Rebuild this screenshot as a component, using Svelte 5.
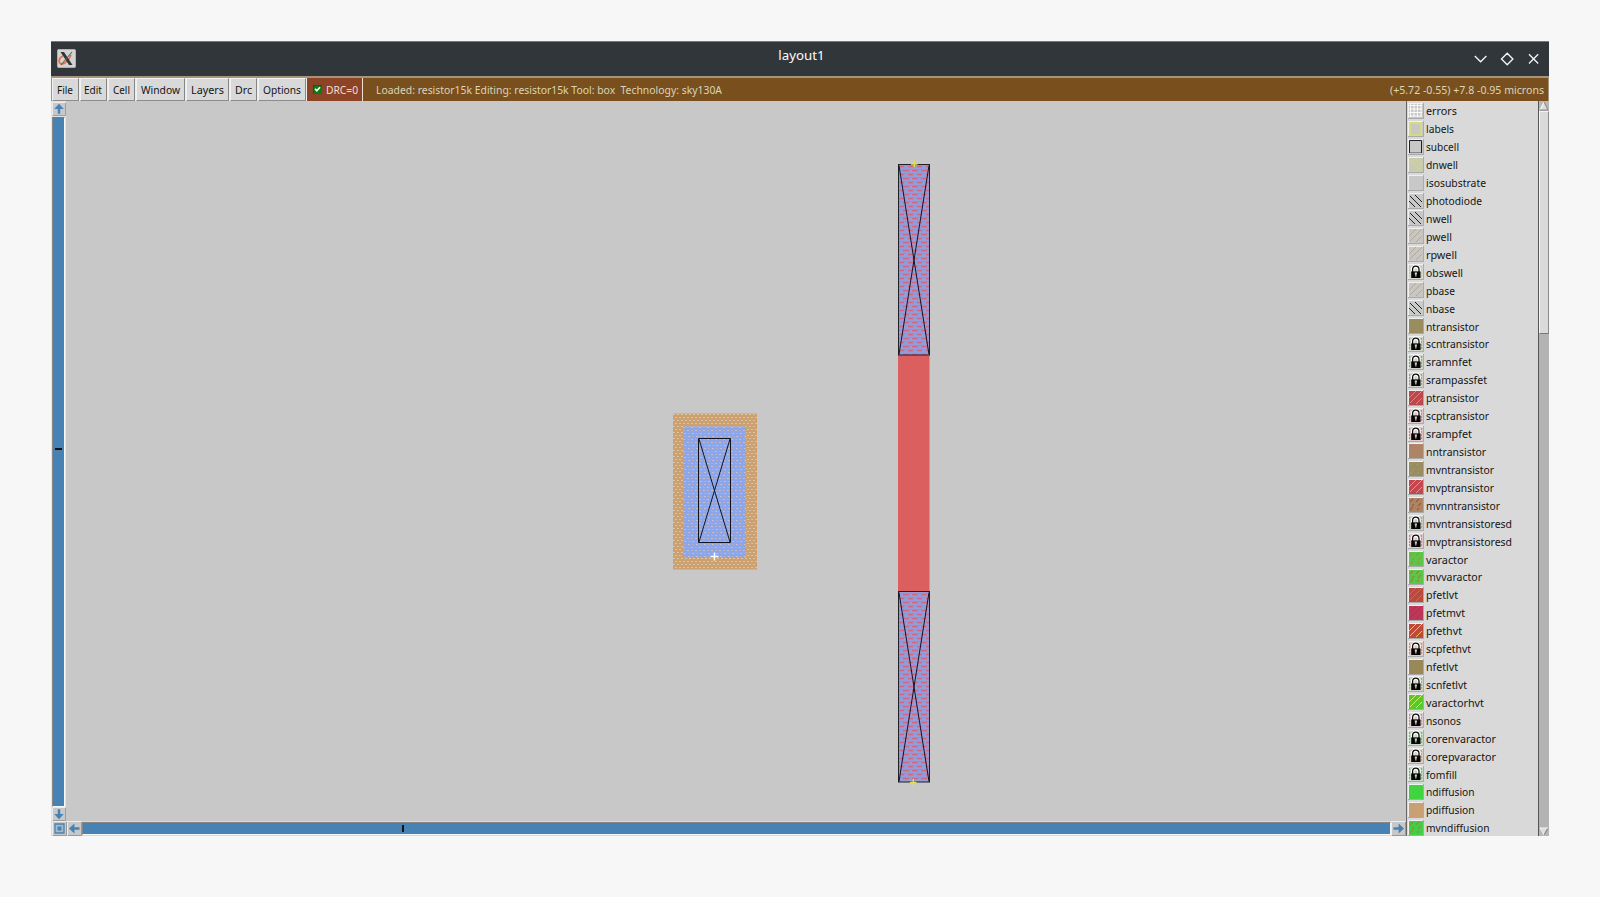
<script>
  // name, button width, label width
  const menus = [['File', 27.5, 16], ['Edit', 28.5, 18], ['Cell', 28, 17], ['Window', 50, 39], ['Layers', 44, 33], ['Drc', 28, 17], ['Options', 49, 38]];
  // name, rendered text width, swatch style, base colour, accent colour
  const layers = [
    ['errors', 31, 'grid', '#c6c6c6', '#fff'],
    ['labels', 28, 'frame', '#c8c8c0', '#d8df76'],
    ['subcell', 33, 'corner', '#c8c8c8', '#222'],
    ['dnwell', 32, 'back', '#cacaae', '#cdd39d'],
    ['isosubstrate', 60, 'plain', '#c8c8c8', ''],
    ['photodiode', 56, 'diag', '#c8c8c8', '#222'],
    ['nwell', 26, 'diag', '#c8c8c8', '#222'],
    ['pwell', 26, 'slash', '#c9c6c2', '#aea797'],
    ['rpwell', 31, 'slash', '#c9c6c2', '#aea797'],
    ['obswell', 37, 'lock', '#d8d8ce', '#c6c8a0'],
    ['pbase', 29, 'slash', '#c9c6c2', '#aea797'],
    ['nbase', 29, 'diag', '#c8cbc8', '#222'],
    ['ntransistor', 53, 'back', '#9d8b60', '#8e965a'],
    ['scntransistor', 63, 'lock', '#ccd2c5', '#84ae78'],
    ['sramnfet', 46, 'lock', '#ccd2c5', '#84ae78'],
    ['srampassfet', 61, 'lock', '#d0d2c8', '#96a886'],
    ['ptransistor', 53, 'slash', '#bd474c', '#e28c84'],
    ['scptransistor', 63, 'lock', '#e0c8ca', '#d87c82'],
    ['srampfet', 46, 'lock', '#e0c8ca', '#d87c82'],
    ['nntransistor', 60, 'plain', '#ae8467', ''],
    ['mvntransistor', 68, 'dots', '#9d8964', '#87a850'],
    ['mvptransistor', 68, 'slash', '#c4474f', '#e89a9e'],
    ['mvnntransistor', 74, 'dots', '#ae8467', '#98603f'],
    ['mvntransistoresd', 86, 'lock', '#ccccc2', '#a6a894'],
    ['mvptransistoresd', 86, 'lock', '#e0c8ce', '#d87c92'],
    ['varactor', 42, 'dots', '#58c846', '#9d9444'],
    ['mvvaractor', 56, 'dots', '#58c846', '#ac7848'],
    ['pfetlvt', 32, 'slash', '#b94a42', '#c97840'],
    ['pfetmvt', 39, 'slash', '#bf365b', '#a8304c'],
    ['pfethvt', 36, 'slash', '#c04a38', '#ffd060'],
    ['scpfethvt', 45, 'lock', '#e2cac2', '#dc8c76'],
    ['nfetlvt', 32, 'slash', '#98895a', '#a88048'],
    ['scnfetlvt', 41, 'lock', '#d0d4c4', '#90b07c'],
    ['varactorhvt', 58, 'slash', '#58c92c', '#e8f060'],
    ['nsonos', 35, 'lock', '#dccdd0', '#c890a0'],
    ['corenvaractor', 70, 'lock', '#c6dcc4', '#60cc58'],
    ['corepvaractor', 70, 'lock', '#dcd0c6', '#d0a07c'],
    ['fomfill', 31, 'lock', '#c4d8c4', '#70c074'],
    ['ndiffusion', 48.5, 'plain', '#40d540', ''],
    ['pdiffusion', 48.5, 'plain', '#c9a073', ''],
    ['mvndiffusion', 63.5, 'dots', '#40d046', '#7a9a3c']
  ];
</script>

{#snippet label(text, width)}
  <svg class="label" width={width} height="17" viewBox="0 0 {width} 17"><text x="0" y="12.5" textLength={width} lengthAdjust="spacingAndGlyphs">{text}</text></svg>
{/snippet}

{#snippet arrow(angle)}
  <svg class="arrow" width="15" height="15" viewBox="0 0 15 15">
    <path d="M0.5 14.5V.5H14.5" stroke="#eee" fill="none" />
    <path d="M14.5 1V14.5H1" stroke="#999" fill="none" />
    <path transform="rotate({angle} 7.5 7.5)" d="M7.5 2 12.6 7.4H8.8V12.5H6.2V7.4H2.4Z" fill="#4682b4" />
  </svg>
{/snippet}

<main>
  <section class="window">
    <header>
      <svg class="logo" width="19" height="19" viewBox="0 0 19 19">
        <rect x=".5" y=".5" width="18" height="18" rx="1" fill="#d3d4d2" stroke="#aeb1b2" />
        <path d="M6 7C1 9 1 15 5 15c3 0 7-4 9-9" fill="none" stroke="#e2754b" stroke-width="1.8" />
        <path d="M3.5 3H7L15.5 16H12Z" fill="#30363a" />
        <path d="M15 3 4 16" stroke="#5c6164" stroke-width="1.1" />
      </svg>
      <h1>layout1</h1>
      <svg class="controls" width="66" height="14" viewBox="0 0 66 14">
        <g fill="none" stroke="#f4f4f4" stroke-width="1.35">
          <path d="M.8 4 6.6 9.8 12.4 4M27.5 7 33.2 1.3 38.9 7 33.2 12.7ZM55 2.2 64.2 11.4M64.2 2.2 55 11.4" />
        </g>
      </svg>
    </header>

    <nav>
      {#each menus as [name, w, textWidth]}
        <button style="width:{w - 1}px">{@render label(name, textWidth)}</button>
      {/each}
      <div class="drc">
        <svg width="9" height="9" viewBox="0 0 9 9"><path d="M0 0H9V9H0Z" fill="#097d15" /><path d="M0 9V0H9" fill="none" stroke="#123f12" /><path d="M2 3.7 3.8 5.8 7 2.3" fill="none" stroke="#fff" stroke-width="1.7" /></svg>
        {@render label('DRC=0', 32)}
      </div>
      <div class="status">
        {@render label('Loaded: resistor15k Editing: resistor15k Tool: box\u00a0 Technology: sky130A', 346)}
        {@render label('(+5.72 -0.55) +7.8 -0.95 microns', 154)}
      </div>
    </nav>

    <div class="workspace">
      <div class="vertical">
        {@render arrow(0)}
        <div class="track"><i></i></div>
        {@render arrow(180)}
      </div>

      <svg class="canvas" width="1340" height="720" viewBox="66 101 1340 720">
        <defs>
          <pattern id="diff" x="673" y="413" width="4" height="6" patternUnits="userSpaceOnUse">
            <rect width="4" height="6" fill="#cda16f" /><path d="M0 1.5H2M2 4.5H4" stroke="#d8c3a4" />
          </pattern>
          <pattern id="local" x="683" y="426" width="8" height="12" patternUnits="userSpaceOnUse">
            <rect width="8" height="12" fill="#8ca6ec" />
            <path d="M0 1.5H2M4 4.5H6M1 7.5H3M5 10.5H7" stroke="#c2bfcb" />
            <path d="M4 1.5H6M0 4.5H2M5 7.5H7M1 10.5H3" stroke="#c0a8ae" />
          </pattern>
          <pattern id="poly" x="898" y="164" width="9" height="8" patternUnits="userSpaceOnUse">
            <rect width="9" height="8" fill="#959bd8" />
            <path d="M1 2.5H6M0 6.5H2M5 6.5H9" stroke="#cf687e" stroke-width="1.5" />
            <path d="M6 1.5H9M2 5.5H6M3 3.5H5M7 7.5H9" stroke="#b389ac" stroke-width=".9" />
          </pattern>
        </defs>
        <rect x="673" y="413.5" width="84" height="156" fill="url(#diff)" />
        <rect x="683" y="426.5" width="63" height="131" fill="url(#local)" />
        <g fill="none" stroke="#111420" stroke-width="1">
          <path d="M698.5 438.5H730.5V542.5H698.5ZM699 439 730 542M730 439 699 542" />
        </g>
        <path d="M710.5 556.5H718.5M714.5 552.5V560.5" stroke="#fff" stroke-width="1.4" />

        <rect x="898" y="355" width="31.5" height="237" fill="#dc5f5f" />
        {#each [164.5, 591.5] as y}
          <rect x="898.5" {y} width="31" height="190.5" fill="url(#poly)" stroke="#202028" stroke-width="1" />
          <path d="M899 {y + 1}L929 {y + 190}M929 {y + 1}L899 {y + 190}" stroke="#15121d" stroke-width="1" />
        {/each}
        <path d="M911 164H917.5M914.3 160.5V167M910 782.5H916.5M913.3 779V786" stroke="#e9df45" stroke-width="1.3" />
      </svg>

      <div class="bottom">
        <svg class="arrow" width="15" height="15" viewBox="0 0 15 15">
          <path d="M.5 14.5V.5H14.5" fill="none" stroke="#eee" /><path d="M14.5 1V14.5H1" fill="none" stroke="#999" />
          <path d="M3 3H12V12H3Z" fill="#a6bac8" stroke="#4682b4" stroke-width="1.3" /><rect x="5.5" y="5.5" width="4" height="4" fill="#4682b4" />
        </svg>
        {@render arrow(-90)}
        <div class="track"><i></i></div>
        {@render arrow(90)}
      </div>

      <aside>
        {#each layers as [name, width, kind, base, accent]}
          <div class="layer">
            <svg class="swatch" width="16" height="16" viewBox="0 0 16 16">
              <path d="M0 0H16V16H0Z" fill="#aaa" /><path d="M0 0H15V1H1V15H0Z" fill="#f0f0f0" />
              <rect x="1" y="1" width="14" height="14" fill={base} />
              {#if kind === 'grid'}
                <path d="M1 2.5H14M1 6H14M1 9.5H14M1 13H14M2.5 1V14M6 1V14M9.5 1V14M13 1V14" stroke={accent} stroke-width=".9" />
              {:else if kind === 'frame'}
                <rect x="2" y="2" width="11" height="12" fill="none" stroke={accent} stroke-width="1.5" />
              {:else if kind === 'corner'}
                <path d="M1.5 14V1.5H13.5V14" fill="none" stroke={accent} stroke-width="1" />
                <path d="M2 13.5H13" stroke="#888" />
              {:else if kind === 'diag'}
                <path d="M1 8 7 14M2 3 13 14M7 2 14 9" stroke={accent} stroke-width="1" />
              {:else if kind === 'slash'}
                <path d="M1 8 8 1M2 13 14 1M8 14 14 8" stroke={accent} stroke-width=".9" />
              {:else if kind === 'back'}
                <path d="M2 3 13 14M7 2 14 9" stroke={accent} stroke-width="1.2" />
              {:else if kind === 'dots'}
                <path d="M2 5 5 2M8 5 11 2M4 9 6 7M10 9 13 6M2 13 5 10M9 13 11 11" stroke={accent} stroke-width="1.2" />
              {:else if kind === 'lock'}
                <path d="M1.5 2V14M13.5 2V14M4 3 6 1M10 2 12 4" stroke={accent} stroke-width="1.2" stroke-dasharray="2 1" />
                <path d="M4.6 8V5.6Q4.6 2.2 7.8 2.2T11 5.6V8" stroke="#fff" stroke-width="3.4" fill="none" />
                <path d="M4.6 8V5.6Q4.6 2.2 7.8 2.2T11 5.6V8" stroke="#090909" stroke-width="1.3" fill="none" />
                <rect x="3.2" y="7.4" width="9.3" height="6.6" fill="#050505" />
                <path d="M6.8 8.6H8.9V10.4H8.4V12.4H7.3V10.4H6.8Z" fill={base} />
              {/if}
            </svg>
            {@render label(name, width)}
          </div>
        {/each}
      </aside>

      <div class="scrollbar">
        <svg width="10" height="10" viewBox="0 0 10 10"><rect width="10" height="10" fill="#b8b8b8" /><path d="M5 1 9 9H1Z" fill="#dedede" /><path d="M5 1 1 9" stroke="#fff" /><path d="M5 1 9 9H1" fill="none" stroke="#858585" /></svg>
        <div class="thumb"></div>
        <svg class="down" width="10" height="9" viewBox="0 0 10 9"><rect width="10" height="9" fill="#b6b6b6" /><path d="M1 1H9L5 8Z" fill="#ddd" /><path d="M9 1 5 8" stroke="#777" /><path d="M9 1H1L5 8" fill="none" stroke="#f2f2f2" /></svg>
      </div>
    </div>
  </section>
</main>

<style>
  :global(body) { margin: 0; background: #f7f7f7; }
  * { box-sizing: border-box; }
  main { height: 897px; padding: 41px 51px; background: #f7f7f7; overflow: hidden; }
  .window { width: 1498px; height: 795px; background: #d9d9d9; font-family: "Noto Sans", sans-serif; }
  header { height: 35px; padding: 1px 9px 0 6px; display: flex; align-items: center; justify-content: space-between; background: #31363b; border-top: 1px solid #777b7e; }
  .logo { margin-top: -2px; }
  h1 { margin: -10px 0 0 53px; color: #fcfcfc; font-size: 13.3px; line-height: 20px; font-weight: 400; }
  .controls { margin-top: -1px; }
  nav { height: 25px; padding: 2px 1px 0; display: flex; background: #a5947c; }
  button { height: 23px; margin: 0 1px 0 0; padding: 0; flex: none; display: flex; align-items: center; justify-content: center; background: #d9d9d9; border: 1px solid; border-color: #f5f5f5 #858585 #8c8c8c #f1f1f1; box-shadow: 1px 0 #eee; }
  .label { display: block; flex: none; overflow: visible; font: 11px "Noto Sans", sans-serif; fill: #151515; }
  .drc { width: 56px; flex: none; display: flex; align-items: center; justify-content: space-between; padding: 0 4px 0 6px; background: #8d4426; border-right: 1px solid #eee2d5; }
  .drc .label { fill: #f2dfd2; }
  .status { flex: 1; display: flex; align-items: center; justify-content: space-between; padding: 0 4px 0 12.5px; background: #79501d; }
  .status .label { fill: #d8d5b9; }
  .workspace { height: 735px; display: grid; grid-template-columns: 15px 1340px 132px 11px; grid-template-rows: 720px 15px; }
  .vertical { padding: 1px 0 0 1px; display: flex; flex-direction: column; background: #e4e4e4; }
  .arrow { display: block; flex: none; background: #c8c8c8; }
  .vertical :global(.arrow) { width: 14px; height: 14px; }
  .vertical .track { width: 13px; flex: 1; margin: 1px 0 0; background: #4682b4; border: 1px solid; border-color: #777 #f7f7f7 #f7f7f7 #888; display: flex; align-items: center; justify-content: center; }
  .vertical i { width: 7px; height: 2px; margin-top: -26px; background: #101010; }
  .canvas { display: block; background: #c8c8c8; }
  .bottom { grid-column: 1 / 3; grid-row: 2; padding-left: 1px; display: flex; background: #dadada; }
  .bottom .track { flex: 1; height: 13px; margin: 1px 0 0; background: #4682b4; border: 1px solid; border-color: #858585 #f5f5f5 #f5f5f5 #858585; display: flex; align-items: center; }
  .bottom i { width: 2px; height: 7px; margin-left: 319px; background: #101010; }
  aside { grid-column: 3; grid-row: 1 / 3; height: 735px; padding: 1px 0 0; overflow: hidden; background: #d9d9d9; border-left: 1px solid #666; }
  .layer { height: 17.93px; padding-left: 1px; display: flex; align-items: center; gap: 2px; }
  .swatch { display: block; flex: none; }
  .scrollbar { grid-column: 4; grid-row: 1 / 3; display: flex; flex-direction: column; background: #b3b3b3; border-left: 1px solid #555; }
  .scrollbar svg { flex: none; }
  .thumb { height: 223px; background: #dadada; border: 1px solid; border-color: #f3f3f3 #8b8b8b #777 #f3f3f3; }
  .down { margin-top: auto; }
</style>
